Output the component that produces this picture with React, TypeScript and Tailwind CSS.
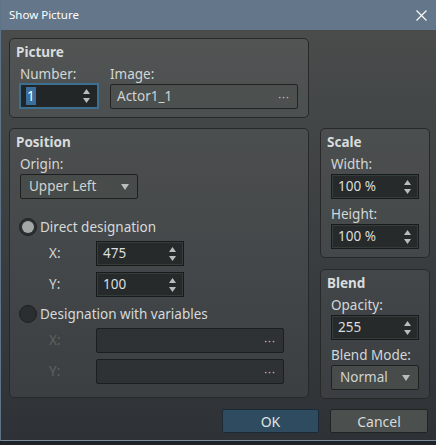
import React from 'react';

const font = { fontFamily: '"Noto Sans", "Open Sans", sans-serif' };

function Arrows() {
  return (
    <div className="flex flex-col items-center gap-[4px] mr-[7px]">
      <svg width="7" height="5" viewBox="0 0 7 5"><path d="M3.5 0 L7 5 L0 5 Z" fill="#b9bdbd" /></svg>
      <svg width="7" height="5" viewBox="0 0 7 5"><path d="M0 0 L7 0 L3.5 5 Z" fill="#b9bdbd" /></svg>
    </div>
  );
}

function Spin({ value, w, focus = false }: { value: string; w: string; focus?: boolean }) {
  if (focus) {
    return (
      <div className={`${w} h-[26px] border-2 border-[#3d6f92] bg-[#222626] flex items-center justify-between`}>
        <span className="ml-[5px] bg-[#3a6e9c] text-white leading-[18px] px-[1px]">{value}</span>
        <Arrows />
      </div>
    );
  }
  return (
    <div className={`${w} h-[25px] border border-[#181b1b] bg-[#262a2a] shadow-[inset_0_0_0_1px_#353d3b] flex items-center justify-between`}>
      <span className="ml-[6px] text-[#dadede]">{value}</span>
      <Arrows />
    </div>
  );
}

function Combo({ value, w }: { value: string; w: string }) {
  return (
    <div className={`${w} h-[25px] border border-[#1e2120] rounded-[2px] bg-[#474b49] flex items-center justify-between`}>
      <span className="ml-[8px] text-[#cfd3d2]">{value}</span>
      <svg width="8" height="6" viewBox="0 0 8 6" className="mr-[8px]"><path d="M0 0 L8 0 L4 6 Z" fill="#b9bdbd" /></svg>
    </div>
  );
}

function Ref({ value, w, dark = false }: { value: string; w: string; dark?: boolean }) {
  return (
    <div className={`${w} h-[25px] border rounded-[2px] flex items-center justify-between ${dark ? 'bg-[#2e3234] border-[#1c1f20]' : 'bg-[#4c504e] border-[#212423]'}`}>
      <span className="ml-[6px] text-[#cfd3d2]">{value}</span>
      <span className="mr-[7px] text-[#c3c7c7] text-[11px] tracking-[1px] leading-none">···</span>
    </div>
  );
}

function Radio({ checked, label }: { checked: boolean; label: string }) {
  return (
    <div className="flex items-center h-[18px] ml-[3px]">
      <div className={`w-[18px] h-[18px] rounded-full border border-[#1f2223] flex items-center justify-center ${checked ? 'bg-[#2c3030]' : 'bg-[#2a2e30]'}`}>
        {checked && <div className="w-[12px] h-[12px] rounded-full bg-[#a3a7a6]" />}
      </div>
      <span className="ml-[3px] text-[#d6dada]">{label}</span>
    </div>
  );
}

function Group({ title, className, children }: { title: string; className: string; children: React.ReactNode }) {
  return (
    <div className={`${className} border border-[#262928] rounded-[5px] bg-white/[0.05] pl-[6px] pt-[4px]`}>
      <div className="font-bold text-[#d8dcdc] leading-[18px]">{title}</div>
      {children}
    </div>
  );
}

function Label({ text, className = '' }: { text: string; className?: string }) {
  return <div className={`leading-[18px] text-[#d3d7d6] ${className}`}>{text}</div>;
}

export default function App() {
  return (
    <div className="w-[436px] h-[445px] bg-[#1f2226] text-[13.5px]" style={font}>
      <div className="h-[441px] border-l border-b border-l-[#5f7386] border-b-[#7a8c9b] flex flex-col">
        <div className="h-[30px] bg-[#63768a] flex items-center justify-between pl-[8px] pr-[9px] shrink-0">
          <span className="text-white text-[11.5px]">Show Picture</span>
          <svg width="11" height="11" viewBox="0 0 11 11">
            <path d="M0.5 0.5 L10.5 10.5 M10.5 0.5 L0.5 10.5" stroke="#ffffff" strokeWidth="1.1" />
          </svg>
        </div>
        <div className="flex-1 bg-linear-to-b from-[#494c4b] to-[#2e3236] pl-[8px] pt-[8px]">
          <Group title="Picture" className="w-[300px] h-[80px]">
            <div className="flex mt-[4px]">
              <div className="ml-[3px] w-[80px]">
                <Label text="Number:" className="ml-[1px]" />
                <Spin value="1" w="w-[80px]" focus />
              </div>
              <div className="ml-[11px]">
                <Label text="Image:" />
                <div className="mt-[1px]">
                  <Ref value="Actor1_1" w="w-[188px]" />
                </div>
              </div>
            </div>
          </Group>

          <div className="flex mt-[10px] gap-[11px]">
            <Group title="Position" className="w-[300px] h-[270px]">
              <Label text="Origin:" className="mt-[4px] ml-[4px]" />
              <div className="mt-[1px] ml-[4px]">
                <Combo value="Upper Left" w="w-[118px]" />
              </div>
              <div className="mt-[19px]">
                <Radio checked label="Direct designation" />
              </div>
              <div className="flex items-center mt-[5px] ml-[33px]">
                <span className="w-[47px] text-[#d3d7d6]">X:</span>
                <Spin value="475" w="w-[88px]" />
              </div>
              <div className="flex items-center mt-[6px] ml-[33px]">
                <span className="w-[47px] text-[#d3d7d6]">Y:</span>
                <Spin value="100" w="w-[88px]" />
              </div>
              <div className="mt-[8px]">
                <Radio checked={false} label="Designation with variables" />
              </div>
              <div className="flex items-center mt-[5px] ml-[33px]">
                <span className="w-[47px] text-[#5d6261]">X:</span>
                <Ref value="" w="w-[188px]" dark />
              </div>
              <div className="flex items-center mt-[6px] ml-[33px]">
                <span className="w-[47px] text-[#5d6261]">Y:</span>
                <Ref value="" w="w-[188px]" dark />
              </div>
            </Group>

            <div className="flex flex-col gap-[11px]">
              <Group title="Scale" className="w-[110px] h-[130px]">
                <Label text="Width:" className="mt-[4px] ml-[4px]" />
                <div className="mt-[1px] ml-[4px]">
                  <Spin value="100 %" w="w-[88px]" />
                </div>
                <Label text="Height:" className="mt-[6px] ml-[4px]" />
                <div className="mt-[1px] ml-[4px]">
                  <Spin value="100 %" w="w-[88px]" />
                </div>
              </Group>
              <Group title="Blend" className="w-[110px] h-[130px]">
                <Label text="Opacity:" className="mt-[4px] ml-[4px]" />
                <div className="mt-[1px] ml-[4px]">
                  <Spin value="255" w="w-[88px]" />
                </div>
                <Label text="Blend Mode:" className="mt-[6px] ml-[4px]" />
                <div className="mt-[1px] ml-[4px]">
                  <Combo value="Normal" w="w-[88px]" />
                </div>
              </Group>
            </div>
          </div>

          <div className="flex justify-end gap-[11px] mt-[10px] pr-[8px]">
            <div className="w-[97px] h-[24px] border border-[#1c2a35] rounded-[2px] bg-[#2f4b60] flex items-center justify-center text-[#dfe3e3] text-[14px]">OK</div>
            <div className="w-[98px] h-[24px] border border-[#212423] rounded-[2px] bg-[#4b4f4d] flex items-center justify-center text-[#d6dada] text-[14px]">Cancel</div>
          </div>
        </div>
      </div>
    </div>
  );
}
